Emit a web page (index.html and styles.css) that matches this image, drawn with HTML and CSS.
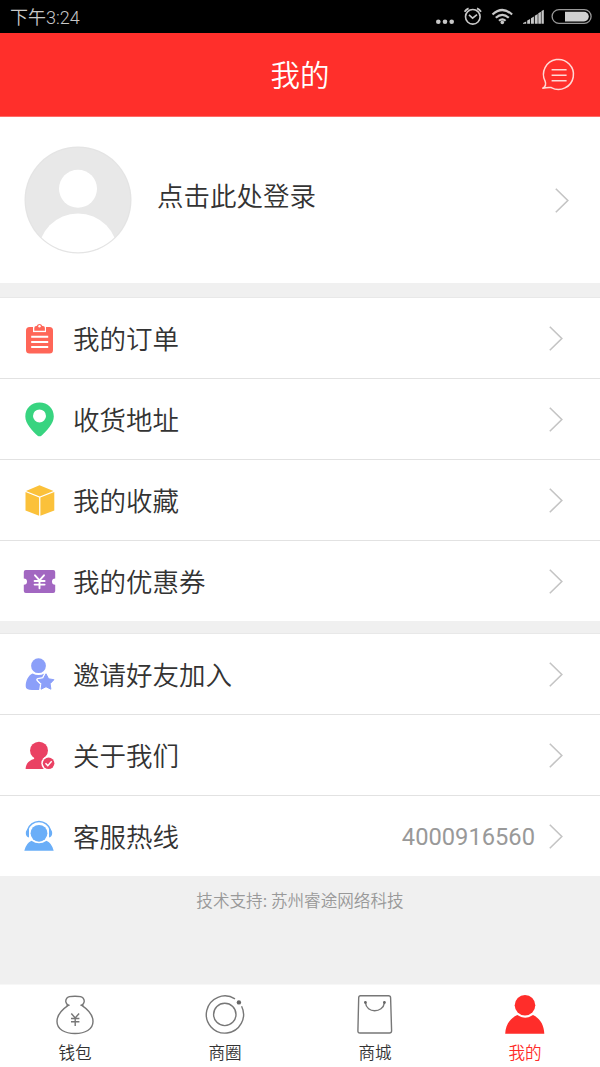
FILE: index.html
```html
<!DOCTYPE html>
<html lang="zh-CN">
<head>
<meta charset="utf-8">
<title>我的</title>
<link rel="stylesheet" href="styles.css">
</head>
<body>
<div class="app">
  <div class="status">
    <span class="time">下午3:24</span>
    <svg class="status-icons" viewBox="430 0 170 33" fill="none" stroke="#c8c8c8">
      <g fill="#c8c8c8" stroke="none"><circle cx="438.3" cy="21.8" r="2.3"/><circle cx="445" cy="21.8" r="2.3"/><circle cx="451.7" cy="21.8" r="2.3"/></g>
      <circle cx="472.8" cy="16.8" r="7.3" stroke-width="1.6"/>
      <path d="M469 14.8l3.6 3.4 4.4-3.6" stroke-width="1.6"/>
      <path d="M464.6 11.8a8 8 0 0 1 4-3.4M481 11.8a8 8 0 0 0-4-3.4" stroke-width="1.8"/>
      <path d="M492.5 14.5q9.8-9 19.6 0M495.8 17.8q6.5-6 13 0M499 20.8q3.3-3 6.6 0" stroke-width="2.2"/>
      <circle cx="502.3" cy="22.4" r="1.8" fill="#c8c8c8" stroke="none"/>
      <path d="M523 23.8V23l3.2-1.600v2.400zM527.2 23.8v-3.400l2.900-1.500v4.900zM531 23.800v-5.600l2.900-1.700v7.300zM534.800 23.800v-8l2.900-1.800v9.800zM538.300 23.800V13.300l2.600-1.500v12zM541.500 23.800V11l2.300-1.200v14z" fill="#c8c8c8" stroke="none"/>
      <rect x="552.1" y="9.6" width="39" height="13.8" rx="6.9" stroke="#999" stroke-width="1.3"/>
      <path d="M565 11.8h19a4.800 4.800 0 0 1 0 9.600h-19z" fill="#d0d0d0" stroke="none"/>
    </svg>
  </div>

  <header class="header">
    <h1 class="title">我的</h1>
    <svg class="message" viewBox="0 0 34 34" fill="none" stroke="#ffd8d5" stroke-width="1.5" stroke-linejoin="round">
      <path d="M4.2 23.4A15 15 0 1 1 10.3 29.6Q6.5 29.200 1.800 30.200Q5.800 27.500 4.200 23.400Z"/>
      <path d="M10.600 11.800h15M10.600 17.300h15M10.600 22.800h15"/>
    </svg>
  </header>

  <section class="profile">
    <svg class="avatar" viewBox="0 0 108 108">
      <defs><clipPath id="face"><circle cx="54" cy="54" r="52.2"/></clipPath></defs>
      <circle cx="54" cy="54" r="53.5" fill="#e4e4e4"/>
      <g clip-path="url(#face)"><rect width="108" height="108" fill="#e8e8e8"/><circle cx="54" cy="42.800" r="19" fill="#fff"/><ellipse cx="54" cy="108" rx="40" ry="40.500" fill="#fff"/></g>
    </svg>
    <span class="login">点击此处登录</span>
    <svg class="chevron" viewBox="0 0 14 25"><path d="M.8.8l12 11.700L.8 24.200"/></svg>
  </section>

  <ul class="menu">
    <li class="row">
      <svg class="icon" viewBox="0 0 36 36"><rect x="4" y="7" width="27" height="26.500" rx="3.500" fill="#ff6658"/><path d="M11 6.500h13v5.600H11z" fill="#fff"/><path d="M12.300 10.800V8q0-2 2-2h.4a3 3 0 0 1 5.600 0h.6q2 0 2 2v2.800z" fill="#ff6658"/><circle cx="17.500" cy="6.300" r="1.200" fill="#fff"/><path d="M9.200 16.700h17M9.200 21.900h17M9.200 27.100h17" stroke="#fff" stroke-width="2"/></svg>
      <span class="label">我的订单</span>
      <svg class="chevron" viewBox="0 0 14 25"><path d="M.8.8l12 11.700L.8 24.200"/></svg>
    </li>
    <li class="row">
      <svg class="icon" viewBox="0 0 36 36"><path fill-rule="evenodd" d="M17.500 1.600C9.300 1.600 3.300 7.600 3.300 15.400c0 7.200 7.400 14.600 12 19q2.200 1.700 4.400 0C24.300 30 31.800 22.600 31.800 15.400c0-7.800-6-13.800-14.300-13.800zm0 6.800a6.500 6.500 0 1 1 0 13 6.500 6.500 0 0 1 0-13z" fill="#38d480"/></svg>
      <span class="label">收货地址</span>
      <svg class="chevron" viewBox="0 0 14 25"><path d="M.8.8l12 11.700L.8 24.200"/></svg>
    </li>
    <li class="row">
      <svg class="icon" viewBox="0 0 36 36"><path d="M17.500 3.200L31.500 8.900 17.800 14.400 4 8.900zM3.500 10.100l13.600 5.300v18.400L3.500 28.600zM32.300 10.100l-13.900 5.300v18.400l13.900-5.300z" fill="#fbc13a"/></svg>
      <span class="label">我的收藏</span>
      <svg class="chevron" viewBox="0 0 14 25"><path d="M.8.8l12 11.700L.8 24.200"/></svg>
    </li>
    <li class="row">
      <svg class="icon" viewBox="0 0 36 36"><path d="M3.800 7h27.400q2 0 2 2v6.400a3.200 3.200 0 0 0 0 6.400V28q0 2-2 2H3.800q-2 0-2-2v-6.200a3.200 3.200 0 0 0 0-6.400V9q0-2 2-2z" fill="#a267c1"/><path d="M13 12.300l4.500 5 4.500-5M17.500 17v8.300M12.600 18h10M12.600 21.600h10" fill="none" stroke="#fff" stroke-width="1.900" stroke-linecap="round"/></svg>
      <span class="label">我的优惠券</span>
      <svg class="chevron" viewBox="0 0 14 25"><path d="M.8.8l12 11.700L.8 24.200"/></svg>
    </li>
  </ul>

  <ul class="menu">
    <li class="row">
      <svg class="icon" viewBox="0 0 36 36" fill="#8b9ff9"><circle cx="16.500" cy="9.700" r="7.400"/><path d="M10.600 17.500q6 3 11.800 0 3 1.500 4.500 4L17 34H10q-6.300 0-6.300-3.800c0-6 2.900-11 6.900-12.700z"/><path d="M24 17.800l2.600 5 5.300.9-3.800 4 .8 5.500-4.900-2.500-4.900 2.500.8-5.500-3.900-4 5.400-.9z" stroke="#fff" stroke-width="3.600" stroke-linejoin="round"/><path d="M24 17.800l2.600 5 5.300.9-3.800 4 .8 5.500-4.900-2.500-4.900 2.500.8-5.500-3.900-4 5.400-.9z" stroke="#8b9ff9" stroke-width="1" stroke-linejoin="round"/></svg>
      <span class="label">邀请好友加入</span>
      <svg class="chevron" viewBox="0 0 14 25"><path d="M.8.8l12 11.700L.8 24.200"/></svg>
    </li>
    <li class="row">
      <svg class="icon" viewBox="0 0 36 36" fill="#ea4163"><ellipse cx="17" cy="13.500" rx="9" ry="8.700"/><path d="M12.500 20h9v2l6.500 5-4 5H3.600c.3-5.500 3.300-8.500 8.400-10z"/><circle cx="26.600" cy="26.300" r="7.300" fill="#fff"/><circle cx="26.600" cy="26.300" r="5.800"/><path d="M23.500 26.200l2.300 2.400 3.900-4.400" fill="none" stroke="#fff" stroke-width="1.400"/></svg>
      <span class="label">关于我们</span>
      <svg class="chevron" viewBox="0 0 14 25"><path d="M.8.8l12 11.700L.8 24.200"/></svg>
    </li>
    <li class="row">
      <svg class="icon" viewBox="0 0 36 36" fill="#6aaef8"><circle cx="17" cy="15.300" r="8.400"/><path d="M5.600 12a11.900 11.900 0 0 1 22.800 0" fill="none" stroke="#6aaef8" stroke-width="1.500"/><path d="M7 10.400v9.200q-3.200-1-3.200-4.600T7 10.400zM27 10.400v9.200q3.200-1 3.200-4.600T27 10.400zM9.500 22.700q7.500 5.200 15 0 5.400 2.400 7.200 10H2.300q1.800-7.600 7.200-10z"/></svg>
      <span class="label">客服热线</span>
      <span class="phone">4000916560</span>
      <svg class="chevron" viewBox="0 0 14 25"><path d="M.8.8l12 11.700L.8 24.200"/></svg>
    </li>
  </ul>

  <p class="support">技术支持: 苏州睿途网络科技</p>

  <nav class="tabs">
    <a class="tab">
      <svg class="tab-icon" viewBox="0 0 42 42" fill="none" stroke="#777" stroke-width="1.400"><path d="M14.200 11.300C11.500 9.200 11 6.500 13 4Q14 2.200 21 2.200T29 4c2 2.500 1.500 5.200-1.200 7.300C34 15.500 39 20.500 39 27.500 39 35.500 31 39.500 21 39.500S3 35.500 3 27.500C3 20.500 8 15.500 14.200 11.300z"/><path d="M12.500 11.300h3M26.500 11.300h3M17.300 19.500l3.900 4.500 3.900-4.500M21.200 24v8M17 24.500h8.400M17 27.700h8.400"/></svg>
      <span>钱包</span>
    </a>
    <a class="tab">
      <svg class="tab-icon" viewBox="0 0 42 42" fill="none" stroke="#777" stroke-width="1.400"><circle cx="20.800" cy="20.400" r="11.200"/><path d="M31 4.900A18.600 18.600 0 1 0 37.600 12.300"/><circle cx="34.900" cy="8.400" r="2.200" fill="#666" stroke="none"/></svg>
      <span>商圈</span>
    </a>
    <a class="tab">
      <svg class="tab-icon" viewBox="0 0 42 42" fill="none" stroke="#777" stroke-width="1.400"><path d="M6.500 1.800h28q2 0 2.100 2l1 33q0 2.200-2.200 2.200H6q-2.200 0-2.100-2.200l.8-33q.1-2 1.800-2z"/><path d="M11.500 8.800c.8 10.600 17.400 10.600 18.900 0"/><g fill="#666" stroke="none"><circle cx="11.400" cy="8.500" r="1.400"/><circle cx="30.400" cy="8.500" r="1.400"/></g></svg>
      <span>商城</span>
    </a>
    <a class="tab active">
      <svg class="tab-icon" viewBox="0 0 42 42" fill="#ff2d2a"><circle cx="21" cy="11.300" r="10.300"/><path d="M13.300 21.100q8 5.300 15.700 0C36.500 24.700 40 31.200 40.300 39.700H1.200C1.500 31.200 5.500 24.700 13.300 21.100z"/></svg>
      <span>我的</span>
    </a>
  </nav>
</div>
</body>
</html>
```
FILE: styles.css
```css
* { box-sizing: border-box; }
body {
  margin: 0;
  background: #f0f0f0;
  color: #333;
  font-family: "Noto Sans CJK SC", sans-serif;
  font-weight: 350;
}
.app {
  width: 600px;
  height: 1067px;
  display: flex;
  flex-direction: column;
  overflow: hidden;
}
svg { display: block; flex: none; overflow: visible; }

.status {
  flex: none;
  height: 33px;
  padding-left: 10px;
  background: #000;
  color: #c8c8c8;
  display: flex;
  align-items: center;
  justify-content: space-between;
}
.time { font: 350 18px/33px Roboto, "Noto Sans CJK SC", sans-serif; padding-top: 1px; }
.status-icons { width: 170px; height: 33px; }

.header {
  flex: none;
  height: 84px;
  padding: 0 25px;
  background: #ff2f2b;
  border-bottom: 1px solid #ff6b66;
  display: grid;
  grid-template-columns: 34px 1fr 34px;
  align-items: center;
}
.title {
  grid-column: 2;
  margin: 0;
  padding-bottom: 3px;
  text-align: center;
  color: #fff;
  font-size: 29.5px;
  font-weight: 350;
  line-height: 44px;
}
.message { width: 34px; height: 34px; }

.profile {
  flex: none;
  height: 166px;
  padding: 0 31px 0 24px;
  background: #fff;
  display: flex;
  align-items: center;
}
.avatar { width: 108px; height: 108px; }
.login {
  flex: 1;
  padding: 0 0 11px 25px;
  font-size: 26.5px;
  line-height: 40px;
}
.chevron {
  width: 14px;
  height: 25px;
  fill: none;
  stroke: #c4c4c4;
  stroke-width: 1.6px;
}

.menu {
  flex: none;
  list-style: none;
  margin: 14px 0 0;
  padding: 0;
  background: #fff;
}
.menu + .menu { margin-top: 12px; }
.row {
  height: 81px;
  padding: 0 37px 0 22px;
  display: flex;
  align-items: center;
  border-top: 1px solid #e2e2e2;
}
.row:first-child { border-top-color: #e8e8e8; }
.icon { width: 36px; height: 36px; }
.label { flex: 1; padding-left: 15px; font-size: 26.5px; line-height: 40px; }
.phone {
  margin-right: 14px;
  padding-top: 2px;
  color: #999;
  font: 23.7px/30px Roboto, sans-serif;
}

.support {
  margin: 12px 0 0;
  flex: 1;
  text-align: center;
  color: #999;
  font-size: 16.6px;
  line-height: 25px;
}

.tabs {
  flex: none;
  height: 83px;
  background: #fff;
  border-top: 1px solid #f7f7f7;
  display: grid;
  grid-template-columns: repeat(4, 1fr);
}
.tab {
  display: flex;
  flex-direction: column;
  align-items: center;
  padding-top: 9px;
  font-size: 16.6px;
  line-height: 24px;
}
.tab-icon { width: 42px; height: 42px; margin-bottom: 4px; }
.active { color: #ff2d2a; }
```
